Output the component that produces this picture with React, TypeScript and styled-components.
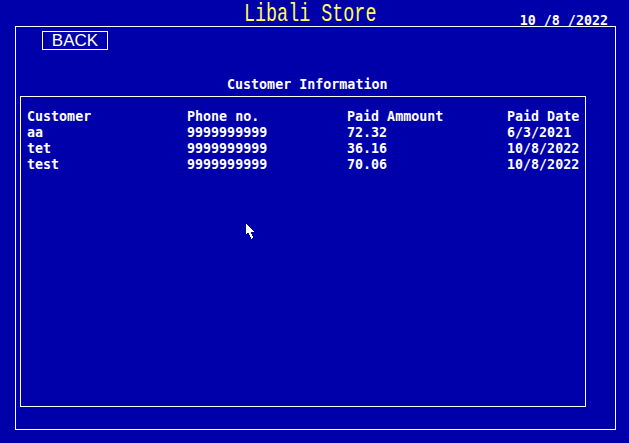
import React from "react";
import styled, { createGlobalStyle } from "styled-components";

const Global = createGlobalStyle`
  html, body { margin: 0; padding: 0; background: #0000aa; }
  body { font-family: "DejaVu Sans Mono", monospace; }
`;

const Screen = styled.div`
  position: relative;
  width: 629px;
  height: 443px;
  background: #0000aa;
  color: #ffffff;
  overflow: hidden;
`;

const Header = styled.header`
  display: flex;
  align-items: flex-start;
  height: 26px;
  padding: 0 21px 0 244px;
  box-sizing: border-box;
`;

const Title = styled.h1`
  margin: 0;
  display: inline-block;
  font-family: "Liberation Mono", monospace;
  font-weight: normal;
  font-size: 18.4px;
  line-height: 18px;
  color: #ffff55;
  transform: scaleY(1.38);
  transform-origin: 0 0;
  margin-top: 3px;
  white-space: pre;
`;

const DateText = styled.div`
  margin-left: auto;
  margin-top: 13px;
  font-family: "DejaVu Sans Mono", monospace;
  font-weight: bold;
  font-size: 13.33px;
  line-height: 16px;
  white-space: pre;
`;

const Frame = styled.main`
  margin-left: 15px;
  width: 601px;
  height: 404px;
  border: 1px solid #ffffff;
  box-sizing: border-box;
  display: flex;
  flex-direction: column;
`;

const BackButton = styled.button`
  margin: 4px 0 0 26px;
  width: 66px;
  height: 19px;
  box-sizing: border-box;
  border: 1px solid #ffffff;
  background: transparent;
  color: #ffffff;
  padding: 0;
  font-family: "Liberation Sans", Arial, sans-serif;
  font-size: 17px;
  line-height: 17px;
  display: flex;
  align-items: center;
  justify-content: center;
`;

const Heading = styled.h2`
  margin: 27px 0 0 211px;
  font-family: "DejaVu Sans Mono", monospace;
  font-weight: bold;
  font-size: 13.33px;
  line-height: 16px;
`;

const TableBox = styled.section`
  margin: 3px 0 0 4px;
  width: 566px;
  height: 311px;
  border: 1px solid #ffffff;
  box-sizing: border-box;
  padding: 12px 0 0 6px;
`;

const Grid = styled.div`
  display: grid;
  grid-template-columns: repeat(4, 160px);
  grid-auto-rows: 16px;
  font-family: "DejaVu Sans Mono", monospace;
  font-weight: bold;
  font-size: 13.33px;
  line-height: 16px;
  white-space: pre;
`;

const Cell = styled.div``;

const Cursor = styled.svg`
  position: absolute;
  left: 246px;
  top: 224px;
`;

const rows = [
  ["Customer", "Phone no.", "Paid Ammount", "Paid Date"],
  ["aa", "9999999999", "72.32", "6/3/2021"],
  ["tet", "9999999999", "36.16", "10/8/2022"],
  ["test", "9999999999", "70.06", "10/8/2022"],
];

export default function App() {
  return (
    <Screen>
      <Global />
      <Header>
        <Title>Libali Store</Title>
        <DateText>10 /8 /2022</DateText>
      </Header>
      <Frame>
        <BackButton>BACK</BackButton>
        <Heading>Customer Information</Heading>
        <TableBox>
          <Grid>
            {rows.map((r, i) =>
              r.map((c, j) => <Cell key={`${i}-${j}`}>{c}</Cell>)
            )}
          </Grid>
        </TableBox>
      </Frame>
      <Cursor width="9" height="16" viewBox="0 0 9 16">
        <polygon
          points="0,0 0,10 2,8 2,9 3,9 3,11 4,11 4,13 5,13 5,15 6,15 6,14 7,14 7,12 6,12 6,10 5,10 5,8 8,8 8,7 0,0"
          fill="#ffffff"
          shapeRendering="crispEdges"
        />
      </Cursor>
    </Screen>
  );
}
